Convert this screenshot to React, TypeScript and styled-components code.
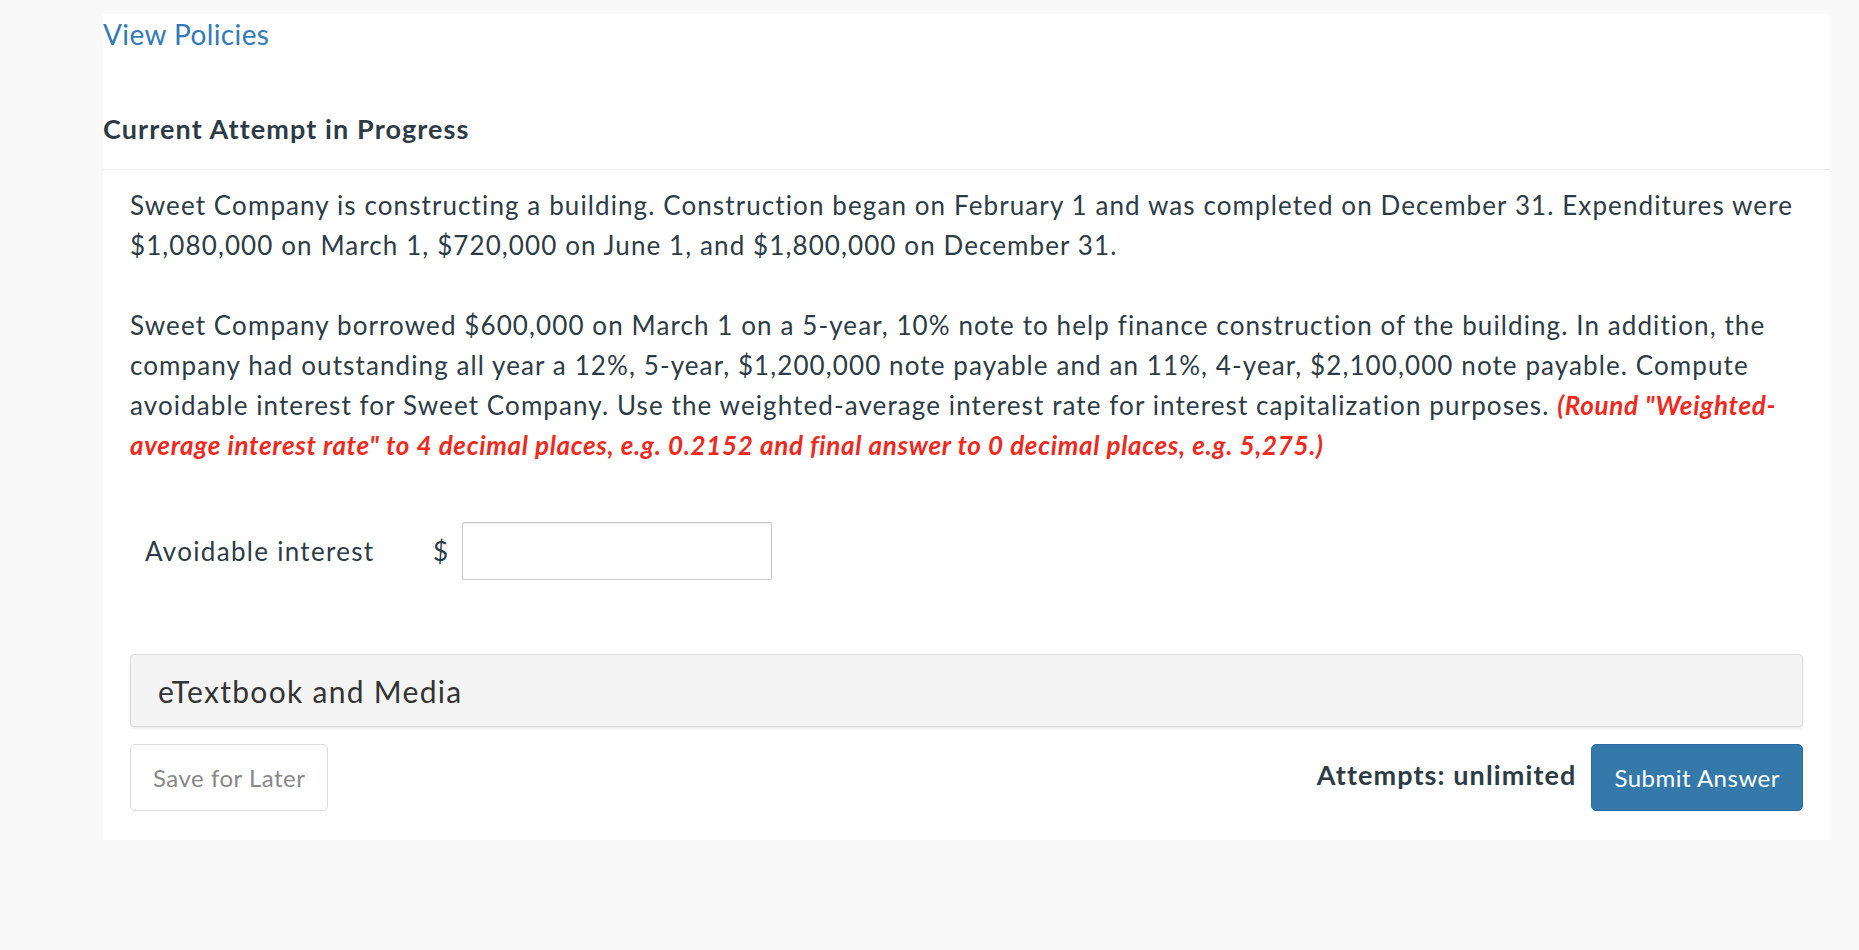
import { useState } from 'react'
import styled, { createGlobalStyle } from 'styled-components'

const GlobalStyle = createGlobalStyle`
  html, body {
    margin: 0;
    padding: 0;
    background: #f9f9f9;
  }
  body {
    font-family: Lato, 'Open Sans', 'Liberation Sans', sans-serif;
    color: #2d3b45;
  }
  * {
    box-sizing: border-box;
  }
`

const Page = styled.div`
  min-height: 950px;
  padding: 14px 29px 0 103px;
`

const Panel = styled.div`
  background: #fff;
  padding-bottom: 29px;
`

const PolicyLink = styled.a`
  display: block;
  font-size: 28px;
  line-height: 40px;
  letter-spacing: 0.4px;
  color: #337ab7;
  text-decoration: none;
  cursor: pointer;
`

const SectionTitle = styled.h2`
  margin: 55px 0 0;
  padding-bottom: 20px;
  border-bottom: 1px solid #e8e8e8;
  font-size: 27px;
  line-height: 40px;
  font-weight: 700;
  letter-spacing: 1.1px;
  color: #2d3b45;
`

const Question = styled.div`
  padding: 15px 27px 0;
`

const Paragraph = styled.p`
  margin: 0 0 40px;
  font-size: 26px;
  line-height: 40px;
  letter-spacing: 1.1px;

  &:last-child {
    margin-bottom: 0;
  }
`

const Hint = styled.em`
  font-weight: 700;
  letter-spacing: 0.68px;
  color: #ee2a1f;
`

const AnswerRow = styled.div`
  display: flex;
  align-items: center;
  margin-top: 57px;
  padding-left: 15px;
`

const AnswerLabel = styled.label`
  width: 288px;
  font-size: 26px;
  line-height: 40px;
  letter-spacing: 1.3px;
`

const Currency = styled.span`
  margin-right: 14px;
  font-size: 26px;
  line-height: 40px;
`

const AnswerInput = styled.input`
  width: 310px;
  height: 58px;
  padding: 0 12px;
  border: 1px solid #c8c8c8;
  border-radius: 2px;
  font-family: inherit;
  font-size: 26px;
  color: #2d3b45;
  outline: none;
  box-shadow: inset 0 1px 1px rgba(0, 0, 0, 0.05);
`

const MediaBar = styled.div`
  margin-top: 74px;
  height: 73px;
  display: flex;
  align-items: center;
  padding: 0 27px;
  background: #f4f4f4;
  border: 1px solid #dcdcdc;
  border-radius: 4px;
  box-shadow: 0 2px 3px rgba(0, 0, 0, 0.08);
  font-size: 30px;
  letter-spacing: 1.3px;
  color: #333;
  cursor: pointer;
`

const Actions = styled.div`
  display: flex;
  align-items: center;
  margin-top: 17px;
`

const Attempts = styled.span`
  margin-left: auto;
  margin-right: 15px;
  margin-bottom: 6px;
  font-size: 27px;
  font-weight: 700;
  letter-spacing: 1.1px;
  color: #2d3b45;
`

const Button = styled.button<{ $primary?: boolean }>`
  height: 67px;
  padding: 0 22px;
  font-family: inherit;
  font-size: 24px;
  letter-spacing: 0.5px;
  border-radius: 5px;
  cursor: pointer;
  border: 1px solid ${(p) => (p.$primary ? '#2e6da4' : '#dcdcdc')};
  background: ${(p) => (p.$primary ? '#3479a9' : '#fff')};
  color: ${(p) => (p.$primary ? '#fff' : '#888')};
`

const App = () => {
  const [answer, setAnswer] = useState('')

  return (
    <>
      <GlobalStyle />
      <Page>
        <Panel>
          <PolicyLink>View Policies</PolicyLink>
          <SectionTitle>Current Attempt in Progress</SectionTitle>
          <Question>
            <Paragraph>
              Sweet Company is constructing a building. Construction began on February 1 and was
              completed on December 31. Expenditures were $1,080,000 on March 1, $720,000 on June 1,
              and $1,800,000 on December 31.
            </Paragraph>
            <Paragraph>
              Sweet Company borrowed $600,000 on March 1 on a 5-year, 10% note to help finance
              construction of the building. In addition, the company had outstanding all year a 12%,
              5-year, $1,200,000 note payable and an 11%, 4-year, $2,100,000 note payable. Compute
              avoidable interest for Sweet Company. Use the weighted-average interest rate for interest
              capitalization purposes.{' '}
              <Hint>
                (Round "Weighted-average interest rate" to 4 decimal places, e.g. 0.2152 and final
                answer to 0 decimal places, e.g. 5,275.)
              </Hint>
            </Paragraph>
            <AnswerRow>
              <AnswerLabel htmlFor="avoidable">Avoidable interest</AnswerLabel>
              <Currency>$</Currency>
              <AnswerInput
                id="avoidable"
                value={answer}
                onChange={(e) => setAnswer(e.target.value)}
              />
            </AnswerRow>
            <MediaBar>eTextbook and Media</MediaBar>
            <Actions>
              <Button>Save for Later</Button>
              <Attempts>Attempts: unlimited</Attempts>
              <Button $primary>Submit Answer</Button>
            </Actions>
          </Question>
        </Panel>
      </Page>
    </>
  )
}

export default App
